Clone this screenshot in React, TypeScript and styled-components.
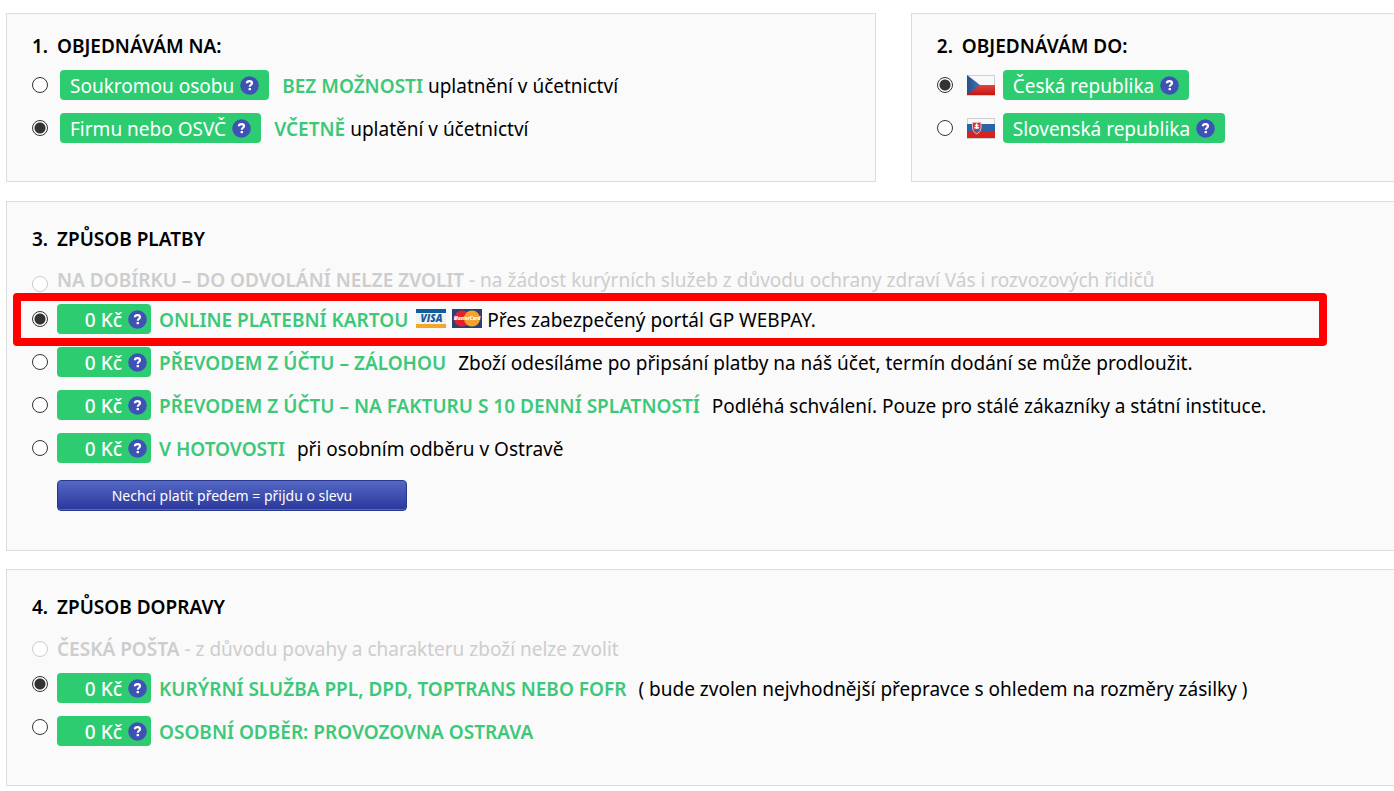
import React from 'react';
import styled, { createGlobalStyle } from 'styled-components';

const GlobalStyle = createGlobalStyle`
  * { box-sizing: border-box; }
  body {
    margin: 0;
    background: #fff;
    color: #000;
    font-family: "Noto Sans", "Open Sans", sans-serif;
    font-size: 19px;
    line-height: 24px;
    overflow-x: hidden;
  }
`;

const Page = styled.form`
  display: flex;
  flex-direction: column;
  gap: 18px;
  padding: 13px 0 6px 6px;
`;

const TopRow = styled.div`
  display: grid;
  grid-template-columns: 9fr 5fr;
  gap: 35px;
  margin-bottom: 1px;
`;

const Panel = styled.section<{ $bleed?: boolean; $roomy?: boolean }>`
  padding: ${p => (p.$roomy ? '25px 0 39px 25px' : '20px 0 38px 25px')};
  background: #fafafa;
  border: 1px solid #dcdcdc;
  border-right-width: ${p => (p.$bleed ? 0 : 1)}px;
`;

const Title = styled.h2<{ $gap: number }>`
  display: grid;
  grid-template-columns: 25px 1fr;
  margin: 0 0 ${p => p.$gap}px;
  font-size: 19px;
  line-height: 24px;
  font-weight: 600;
  white-space: nowrap;
`;

const Options = styled.div`
  display: flex;
  flex-direction: column;
  gap: 13px;
`;

const Option = styled.label<{ $gap?: number; $align?: string }>`
  display: flex;
  align-items: ${p => p.$align || 'center'};
  gap: ${p => p.$gap || 9}px;
  min-height: 30px;
  white-space: nowrap;
`;

const DisabledOption = styled(Option)`
  min-height: 24px;
  margin-bottom: 12px;
  color: #cdcdcd;
`;

const Radio = styled.input.attrs({ type: 'radio' })<{ $raised?: boolean }>`
  appearance: none;
  flex: none;
  width: 16px;
  height: 16px;
  margin: ${p => (p.$raised ? '3px 0 0' : '0')};
  border: 1px solid #333;
  border-radius: 50%;
  background: #fff;
  &:checked { background: radial-gradient(circle, #333 0 5px, #fff 6px); }
  &:disabled { border-color: #ccc; }
`;

const Pill = styled.span<{ $price?: boolean }>`
  display: inline-flex;
  align-items: center;
  justify-content: flex-end;
  gap: 6px;
  min-width: ${p => (p.$price ? 94 : 0)}px;
  height: 30px;
  padding: ${p => (p.$price ? '1px 4px 0' : '1px 10px 0')};
  border-radius: 4px;
  background: #2ecc71;
  color: #fff;
  font-weight: ${p => (p.$price ? 500 : 400)};
`;

const Texts = styled.span<{ $gap: number }>`
  display: flex;
  align-items: center;
  gap: ${p => p.$gap}px;
  padding-top: 2px;
`;

const Spread = styled.span<{ $gap: number }>`
  display: flex;
  align-items: center;
  gap: ${p => p.$gap}px;
`;

const Strong = styled.strong`
  color: #3cc878;
  font-weight: 600;
`;

const Muted = styled.strong`
  font-weight: 600;
`;

const Cards = styled.span`
  display: inline-flex;
  gap: 6px;
  margin: 0 0 4px 3px;
`;

const Highlighted = styled.div`
  position: relative;
`;

const Marker = styled.div`
  position: absolute;
  top: -11px;
  left: -19px;
  right: 67px;
  height: 53px;
  border: 8px solid #fe0000;
  border-radius: 4px;
  pointer-events: none;
`;

const DiscountButton = styled.button`
  display: block;
  width: 350px;
  height: 31px;
  margin: 17px 0 0 25px;
  padding: 0;
  border: 1px solid #28388f;
  border-radius: 4px;
  background: linear-gradient(#5468c4, #2a379b);
  box-shadow: inset 0 -1px 0 #5a68bc;
  color: #fff;
  font-family: "Noto Sans", "Open Sans", sans-serif;
  font-size: 14px;
  line-height: 20px;
`;

const Help = () => (
  <svg width="19" height="19" viewBox="0 0 19 19" aria-hidden="true">
    <circle cx="9.500" cy="9.500" r="9.300" fill="#3f51b5" />
    <path d="M6.900 7.300Q7 5.200 9.500 5.200Q12 5.200 12 7.100Q12 8.300 10.900 8.900Q9.800 9.500 9.800 10.700" fill="none" stroke="#fff" strokeWidth="2.200" />
    <rect x="8.600" y="12" width="2.400" height="2.200" fill="#fff" />
  </svg>
);

const CzechFlag = () => (
  <svg width="28" height="21" viewBox="0 0 28 21" aria-hidden="true">
    <defs>
      <linearGradient id="czRed" x2="0" y2="1"><stop stopColor="#e2443f" /><stop offset="1" stopColor="#c41512" /></linearGradient>
      <linearGradient id="czBlue" x2="1"><stop stopColor="#23508f" /><stop offset="1" stopColor="#4474ad" /></linearGradient>
    </defs>
    <rect width="28" height="21" fill="#cfcfcf" />
    <rect x="1" y="1" width="26" height="9" fill="#f8f8f8" />
    <rect y="10" width="28" height="10" fill="url(#czRed)" />
    <path d="M0 0L13 10L0 20Z" fill="url(#czBlue)" />
  </svg>
);

const SlovakFlag = () => (
  <svg width="28" height="21" viewBox="0 0 28 21" aria-hidden="true">
    <rect width="28" height="21" fill="#cfcfcf" />
    <rect x="1" y="1" width="26" height="6" fill="#f8f8f8" />
    <rect y="6" width="28" height="8" fill="#2c62aa" />
    <rect y="14" width="28" height="6" fill="#d8221f" />
    <path d="M5.500 4.500H14V10Q14 14 9.700 16Q5.500 14 5.500 10Z" fill="#d8323a" stroke="#e3b9bd" />
    <path d="M9.700 5.500V11M8 7.500H11.400M7.300 9.700H12.100" stroke="#fff" strokeWidth="1.400" />
    <path d="M7.200 12.500Q9.700 10.500 12.200 12.500L9.700 14.600Z" fill="#3a62a8" />
  </svg>
);

const Visa = () => (
  <svg width="30" height="19" viewBox="0 0 30 19" role="img" aria-label="Visa">
    <rect width="30" height="19" fill="#f1f1f1" />
    <rect width="30" height="4" fill="#0f5c9f" />
    <rect y="15" width="30" height="4" fill="#f4a62a" />
    <text x="15.500" y="13.400" textAnchor="middle" fontFamily="Open Sans" fontSize="10" fontWeight="800" fontStyle="italic" fill="#0f5c9f">VISA</text>
  </svg>
);

const MasterCard = () => (
  <svg width="30" height="19" viewBox="0 0 30 19" role="img" aria-label="MasterCard">
    <rect width="30" height="19" fill="#2a4176" />
    <circle cx="10" cy="9.500" r="8" fill="#e4202c" />
    <circle cx="20" cy="9.500" r="8" fill="#f6a22c" />
    <text x="15" y="11.300" textAnchor="middle" fontFamily="Open Sans" fontSize="4.600" fontWeight="800" fontStyle="italic" fill="#fff">MasterCard</text>
  </svg>
);

const Price = () => <Pill $price>0 Kč<Help /></Pill>;

export default function App() {
  return (
    <>
      <GlobalStyle />
      <Page>
        <TopRow>
          <Panel>
            <Title $gap={12}><span>1.</span><span>OBJEDNÁVÁM NA:</span></Title>
            <Options>
              <Option $gap={12}>
                <Radio name="buyer" />
                <Spread $gap={13}>
                  <Pill>Soukromou osobu<Help /></Pill>
                  <Texts $gap={5}><Strong>BEZ MOŽNOSTI</Strong><span>uplatnění v účetnictví</span></Texts>
                </Spread>
              </Option>
              <Option $gap={12}>
                <Radio name="buyer" defaultChecked />
                <Spread $gap={13}>
                  <Pill>Firmu nebo OSVČ<Help /></Pill>
                  <Texts $gap={5}><Strong>VČETNĚ</Strong><span>uplatění v účetnictví</span></Texts>
                </Spread>
              </Option>
            </Options>
          </Panel>
          <Panel $bleed>
            <Title $gap={12}><span>2.</span><span>OBJEDNÁVÁM DO:</span></Title>
            <Options>
              <Option $gap={14}>
                <Radio name="country" defaultChecked />
                <Spread $gap={8}><CzechFlag /><Pill>Česká republika<Help /></Pill></Spread>
              </Option>
              <Option $gap={14}>
                <Radio name="country" />
                <Spread $gap={8}><SlovakFlag /><Pill>Slovenská republika<Help /></Pill></Spread>
              </Option>
            </Options>
          </Panel>
        </TopRow>

        <Panel $bleed $roomy>
          <Title $gap={17}><span>3.</span><span>ZPŮSOB PLATBY</span></Title>
          <DisabledOption $align="flex-end">
            <Radio name="payment" disabled />
            <span><Muted>NA DOBÍRKU – DO ODVOLÁNÍ NELZE ZVOLIT</Muted> - na žádost kurýrních služeb z důvodu ochrany zdraví Vás i rozvozových řidičů</span>
          </DisabledOption>
          <Options>
            <Highlighted>
              <Option>
                <Radio name="payment" defaultChecked />
                <Spread $gap={8}>
                  <Price />
                  <Texts $gap={5}>
                    <Strong>ONLINE PLATEBNÍ KARTOU</Strong>
                    <Cards><Visa /><MasterCard /></Cards>
                    <span>Přes zabezpečený portál GP WEBPAY.</span>
                  </Texts>
                </Spread>
              </Option>
              <Marker />
            </Highlighted>
            <Option>
              <Radio name="payment" />
              <Spread $gap={8}>
                <Price />
                <Texts $gap={12}><Strong>PŘEVODEM Z ÚČTU – ZÁLOHOU</Strong><span>Zboží odesíláme po připsání platby na náš účet, termín dodání se může prodloužit.</span></Texts>
              </Spread>
            </Option>
            <Option>
              <Radio name="payment" />
              <Spread $gap={8}>
                <Price />
                <Texts $gap={12}><Strong>PŘEVODEM Z ÚČTU – NA FAKTURU S 10 DENNÍ SPLATNOSTÍ</Strong><span>Podléhá schválení. Pouze pro stálé zákazníky a státní instituce.</span></Texts>
              </Spread>
            </Option>
            <Option>
              <Radio name="payment" />
              <Spread $gap={8}>
                <Price />
                <Texts $gap={12}><Strong>V HOTOVOSTI</Strong><span>při osobním odběru v Ostravě</span></Texts>
              </Spread>
            </Option>
          </Options>
          <DiscountButton type="button">Nechci platit předem = přijdu o slevu</DiscountButton>
        </Panel>

        <Panel $bleed $roomy>
          <Title $gap={18}><span>4.</span><span>ZPŮSOB DOPRAVY</span></Title>
          <DisabledOption>
            <Radio name="delivery" disabled />
            <span><Muted>ČESKÁ POŠTA</Muted> - z důvodu povahy a charakteru zboží nelze zvolit</span>
          </DisabledOption>
          <Options>
            <Option $align="flex-start">
              <Radio name="delivery" $raised defaultChecked />
              <Spread $gap={8}>
                <Price />
                <Texts $gap={12}><Strong>KURÝRNÍ SLUŽBA PPL, DPD, TOPTRANS NEBO FOFR</Strong><span>( bude zvolen nejvhodnější přepravce s ohledem na rozměry zásilky )</span></Texts>
              </Spread>
            </Option>
            <Option $align="flex-start">
              <Radio name="delivery" $raised />
              <Spread $gap={8}>
                <Price />
                <Texts $gap={12}><Strong>OSOBNÍ ODBĚR: PROVOZOVNA OSTRAVA</Strong></Texts>
              </Spread>
            </Option>
          </Options>
        </Panel>
      </Page>
    </>
  );
}
